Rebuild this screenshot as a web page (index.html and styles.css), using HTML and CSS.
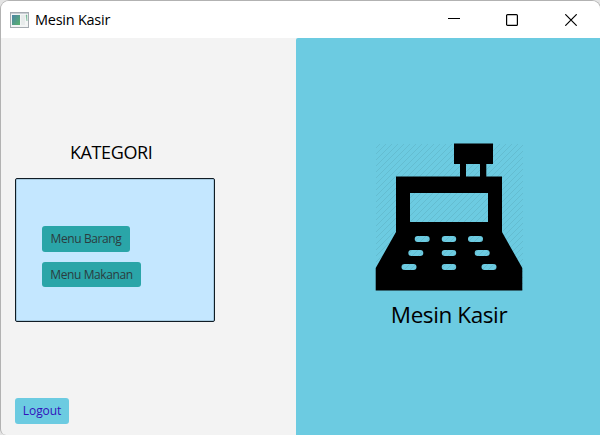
FILE: index.html
```html
<!DOCTYPE html>
<html lang="id">
<head>
<meta charset="utf-8">
<title>Mesin Kasir</title>
<link rel="stylesheet" href="styles.css">
</head>
<body>
<div class="window">
  <header class="titlebar">
    <svg class="app-icon" width="19" height="16" viewBox="0 0 19 16">
      <defs><linearGradient id="pane" x1="0" y1="0" x2="1" y2="1"><stop offset="0" stop-color="#4c83a6"/><stop offset="1" stop-color="#58b36c"/></linearGradient></defs>
      <rect x=".5" y=".5" width="18" height="15" fill="#f3f5f5" stroke="#a5abb1"/>
      <rect x="1" y="1" width="17" height="1" fill="#c9ced4"/>
      <rect x="2" y="3" width="8" height="10" fill="url(#pane)"/>
      <rect x="11" y="3" width="4" height="10" fill="#e7ebeb"/>
      <path d="M16 3h1v6z" fill="#5cae83" stroke="#7abb9a" stroke-width=".5"/>
    </svg>
    <h1 class="title">Mesin Kasir</h1>
    <div class="controls">
      <svg class="minimize" width="12" height="12" viewBox="0 0 12 12"><path d="M0 4.5h12" stroke="#000"/></svg>
      <svg width="12" height="12" viewBox="0 0 12 12"><rect x=".6" y=".6" width="10.8" height="10.8" rx="1" fill="none" stroke="#000" stroke-width="1.2"/></svg>
      <svg width="12" height="12" viewBox="0 0 12 12"><path d="M.3.3l11.4 11.4M11.7.3L.3 11.7" stroke="#000" stroke-width="1.2"/></svg>
    </div>
  </header>
  <main class="content">
    <section class="side">
      <h2 class="heading">KATEGORI</h2>
      <div class="menu">
        <button class="btn barang">Menu Barang</button>
        <button class="btn makanan">Menu Makanan</button>
      </div>
      <button class="btn logout">Logout</button>
    </section>
    <section class="brand">
      <svg class="register" width="148" height="148" viewBox="0 0 148 148">
        <defs><pattern id="hatch" width="6" height="6" patternUnits="userSpaceOnUse"><path d="M-1 1l2-2M0 6l6-6M5 7l2-2" stroke="#000" stroke-opacity=".07" stroke-width="1"/></pattern></defs>
        <path fill="#000" fill-rule="evenodd" d="M79 .4h39V21h-6.7v12.6H127V89l20.3 36v22.4H.7V125L21 89V33.6h64V21h-6zM91 21v12.6h14V21zM35 50v29h78V50z"/>
        <g fill="#6ccbe1">
          <rect x="39.7" y="93" width="15" height="6" rx="3"/><rect x="66.7" y="93" width="14.5" height="6" rx="3"/><rect x="93" y="93" width="15" height="6" rx="3"/>
          <rect x="33.3" y="107" width="15" height="6" rx="3"/><rect x="66.7" y="107" width="14.5" height="6" rx="3"/><rect x="99.7" y="107" width="15" height="6" rx="3"/>
          <rect x="26.5" y="121" width="15" height="6" rx="3"/><rect x="66.7" y="121" width="14.5" height="6" rx="3"/><rect x="106.5" y="121" width="15" height="6" rx="3"/>
        </g>
        <rect x="1" y="1" width="147" height="146" fill="url(#hatch)"/>
      </svg>
      <p class="caption">Mesin Kasir</p>
    </section>
  </main>
</div>
</body>
</html>
```
FILE: styles.css
```css
* { box-sizing: border-box; }
html { overflow: hidden; }
body {
  margin: 0;
  background: #e4e4e4;
  font-family: "Open Sans", "Noto Sans", sans-serif;
  color: #000;
}
.window {
  width: 601px;
  height: 435px;
  border: 1px solid #b2b2b2;
  border-bottom: 0;
  border-radius: 9px 9px 0 6px;
  overflow: hidden;
  background: #f3f3f3;
}
.titlebar {
  display: flex;
  align-items: center;
  height: 37px;
  padding: 0 23px 0 9px;
  background: #fff;
}
.title {
  margin: 1px 0 0 6px;
  font-size: 14.5px;
  font-weight: 400;
  letter-spacing: -0.25px;
  line-height: 20px;
}
.controls {
  display: flex;
  gap: 47px;
  margin-left: auto;
}
.minimize { margin-right: -1px; }
.content {
  display: flex;
  height: 397px;
}
.side {
  display: flex;
  flex-direction: column;
  align-items: flex-start;
  width: 295px;
  padding: 102px 14px 11px;
}
.heading {
  margin: 0 0 14px 55px;
  font-size: 18px;
  font-weight: 400;
  letter-spacing: -0.4px;
  line-height: 24px;
}
.menu {
  display: flex;
  flex-direction: column;
  align-items: flex-start;
  gap: 10px;
  width: 200px;
  height: 144px;
  padding: 47px 26px;
  border: 1px solid #101c24;
  border-radius: 2px;
  background: #c4e7ff;
  box-shadow: inset 0 0 0 1px #a5c9df;
}
.btn {
  height: 26px;
  padding: 0;
  border: 0;
  border-radius: 3px;
  background: #2aa5a8;
  color: #2b3c40;
  font: 12px/26px "Open Sans", "Noto Sans", sans-serif;
  white-space: nowrap;
}
.barang { width: 88px; letter-spacing: -0.4px; }
.makanan { width: 99px; height: 25px; letter-spacing: -0.4px; }
.logout {
  width: 54px;
  margin-top: auto;
  background: #6ccbe1;
  color: #3212bb;
  letter-spacing: -0.1px;
}
.brand {
  display: flex;
  flex: 1;
  flex-direction: column;
  align-items: center;
  padding: 105px 0 0 2px;
  border-top-left-radius: 2px;
  background: #6ccbe1;
}
.register { display: block; }
.caption {
  margin: 8px 0 0;
  font-size: 22.5px;
  letter-spacing: -0.4px;
  line-height: 32px;
}
```
